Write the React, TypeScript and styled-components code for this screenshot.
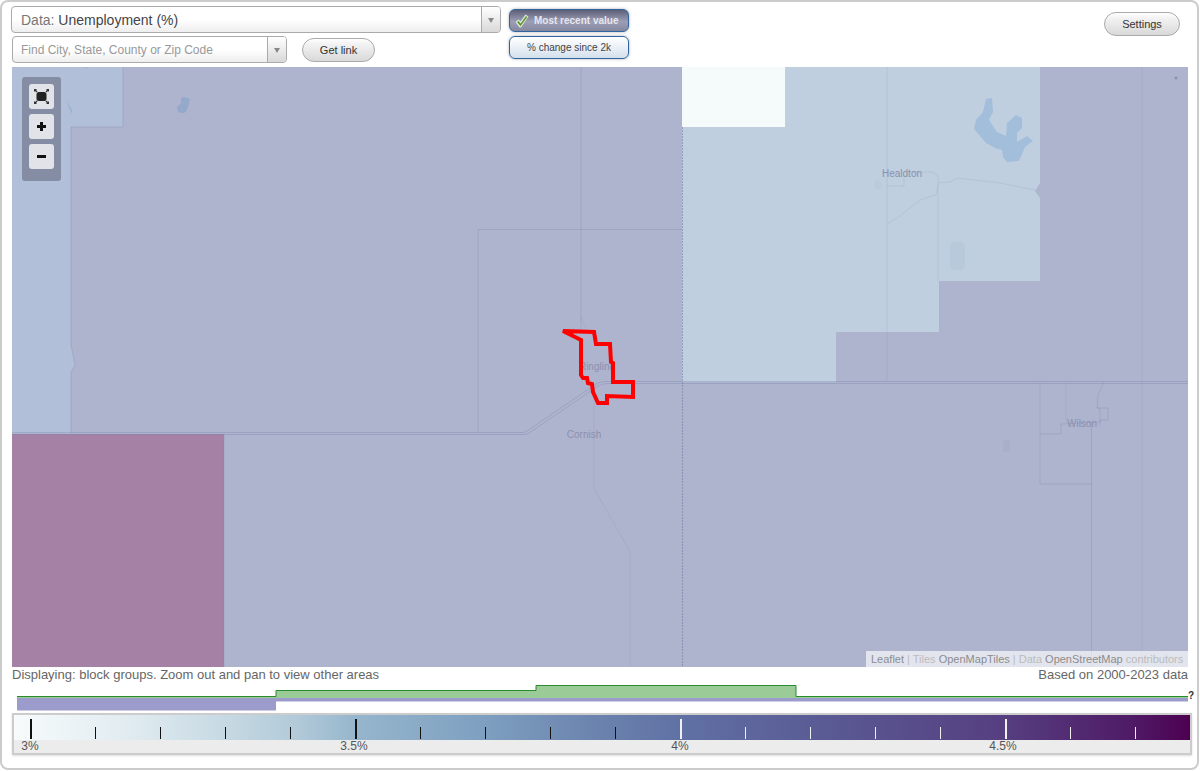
import React from "react";
import styled, { createGlobalStyle } from "styled-components";

const Global = createGlobalStyle`
  html, body { margin: 0; padding: 0; background: #fff; }
  body { font-family: "Liberation Sans", Arial, sans-serif; }
`;

const Frame = styled.div`
  box-sizing: border-box;
  width: 1199px;
  height: 770px;
  border: 2px solid #ccc;
  border-radius: 8px;
  background: #fff;
  padding: 0 8px 0 10px;
  display: flex;
  flex-direction: column;
`;

const Toolbar = styled.header`
  height: 65px;
  display: flex;
  align-items: flex-start;
  margin-left: -1px;
  padding-top: 4px;
  box-sizing: border-box;
`;

const Selects = styled.div`
  width: 490px;
  display: flex;
  flex-direction: column;
  gap: 3px;
`;

const FindRow = styled.div`
  display: flex;
  align-items: flex-start;
  margin-left: 1px;
  gap: 15px;
`;

const Combo = styled.div<{ $w: number }>`
  box-sizing: border-box;
  width: ${(p) => p.$w}px;
  height: 27px;
  border: 1px solid #aaa;
  border-radius: 4px;
  display: flex;
  align-items: stretch;
  overflow: hidden;
  background: linear-gradient(#fff 50%, #eee);
`;

const ComboText = styled.div<{ $size: number; $inset: number }>`
  flex: 1;
  display: flex;
  align-items: center;
  padding-left: ${(p) => p.$inset}px;
  font-size: ${(p) => p.$size}px;
  color: #999;
  white-space: pre;
`;

const DataLabel = styled.span`
  color: #777;
`;
const DataValue = styled.span`
  color: #444;
`;

const ComboArrow = styled.div`
  width: 18px;
  border-left: 1px solid #aaa;
  background: linear-gradient(#fff, #d8d8d8);
  display: flex;
  align-items: center;
  justify-content: center;
  &::after {
    content: "";
    border-left: 3.5px solid transparent;
    border-right: 3.5px solid transparent;
    border-top: 5px solid #888;
    margin-top: 2px;
  }
`;

const PillButton = styled.button`
  box-sizing: border-box;
  height: 24px;
  border: 1px solid #aaa;
  border-radius: 12px;
  padding: 0;
  background: linear-gradient(#fff, #f2f2f2 25%, #d9d9d9);
  font: 11px "Liberation Sans", Arial, sans-serif;
  color: #333;
`;

const GetLink = styled(PillButton)`
  width: 73px;
  margin-top: 2px;
`;

const Settings = styled(PillButton)`
  width: 76px;
  margin: 6px 9px 0 auto;
`;

const Toggles = styled.div`
  display: flex;
  flex-direction: column;
  gap: 4px;
  margin: 3px 0 0 8px;
`;

const Toggle = styled.div<{ $active?: boolean }>`
  box-sizing: border-box;
  width: 120px;
  height: 23px;
  border: 1px solid #2f65a0;
  border-radius: 6px;
  box-shadow: 0 0 3px #aaa;
  display: flex;
  align-items: center;
  justify-content: ${(p) => (p.$active ? "flex-start" : "center")};
  padding-left: ${(p) => (p.$active ? 5 : 0)}px;
  gap: 5px;
  font-size: 10px;
  font-weight: ${(p) => (p.$active ? 700 : 400)};
  color: ${(p) => (p.$active ? "#e6e6ee" : "#444")};
  background: ${(p) =>
    p.$active
      ? "linear-gradient(#5d5f78, #9b9eb4 55%, #85889f)"
      : "linear-gradient(#fff, #e6edf4 60%, #d3e0ec)"};
`;

const MapPane = styled.div`
  position: relative;
  height: 600px;
  width: 1176px;
  flex: none;
  background: #afb4ce;
  overflow: hidden;
`;

const MapSvg = styled.svg`
  display: block;
`;

const Controls = styled.div`
  position: absolute;
  left: 10px;
  top: 10px;
  box-sizing: border-box;
  width: 39px;
  height: 104px;
  padding: 7px;
  border-radius: 3px;
  background: #848da3;
  display: flex;
  flex-direction: column;
  gap: 5px;
`;

const ControlButton = styled.div`
  width: 25px;
  height: 25px;
  border-radius: 3px;
  background: #e2e3e9;
  display: flex;
  align-items: center;
  justify-content: center;
`;

const Attribution = styled.div`
  position: absolute;
  right: 0;
  bottom: 0;
  height: 16px;
  width: 322px;
  box-sizing: border-box;
  background: rgba(255, 255, 255, 0.65);
  padding-left: 5px;
  display: flex;
  align-items: center;
  font-size: 11px;
  color: #bbb;
  white-space: pre;
`;

const AttrLink = styled.span`
  color: #8c8c8c;
`;

const CaptionRow = styled.div`
  box-sizing: border-box;
  height: 16px;
  padding-bottom: 2px;
  display: flex;
  justify-content: space-between;
  align-items: center;
  width: 1176px;
  font-size: 13px;
  color: #666;
  white-space: nowrap;
`;

const Histogram = styled.div`
  position: relative;
  height: 30px;
  width: 1176px;
`;

const Unknown = styled.span`
  position: absolute;
  left: 1176px;
  top: 8px;
  font-size: 10px;
  font-weight: 700;
  line-height: 10px;
  color: #333;
`;

const Legend = styled.div`
  box-sizing: border-box;
  width: 1180px;
  height: 42px;
  border: 2px solid #ccc;
  box-shadow: 0 1px 2px #ddd;
  background: #ececec;
`;

const Ramp = styled.div`
  position: relative;
  height: 25px;
  background: linear-gradient(
    90deg,
    #f7fbfc 0%,
    #e0ebf0 10%,
    #c6d9e3 18%,
    #b2cad9 24%,
    #96b6cd 29%,
    #7e9fc0 40%,
    #6a82ad 50%,
    #6070a4 57%,
    #5a5c95 68%,
    #563f81 84%,
    #4f1b66 95%,
    #4d0050 100%
  );
`;

const Tick = styled.i<{ $major?: boolean; $light?: boolean }>`
  position: absolute;
  bottom: 1px;
  width: ${(p) => (p.$major ? 2 : 1)}px;
  height: ${(p) => (p.$major ? 20 : 12)}px;
  background: ${(p) => (p.$light ? "#f0f0f0" : "#111")};
`;

const Labels = styled.div`
  position: relative;
  height: 13px;
  font-size: 12px;
  line-height: 13px;
  color: #555;
`;

const LegendLabel = styled.span`
  position: absolute;
  top: 0;
  transform: translateX(-50%);
`;

const ticks = [30, 95, 160, 225, 290, 355, 420, 485, 550, 615, 680, 745, 810, 875, 940, 1005, 1070, 1135];
const labels: [string, number][] = [["3%", 30], ["3.5%", 354], ["4%", 680], ["4.5%", 1003]];

const boundary = "rgba(118,128,170,0.3)";
const faint = "rgba(118,128,170,0.16)";
const road = "rgba(118,128,170,0.34)";

const MapDrawing = () => (
  <MapSvg width="1176" height="600" viewBox="12 67 1176 600">
    <path d="M12 67H123V127H71V345L75 365L71 372V433H12Z" fill="#b2bfd8" />
    <path d="M682 67H1040V183L1035 191L1040 198V382H682Z" fill="#bfcfe0" />
    <rect x="682" y="67" width="103" height="60" fill="#f5fbfb" />
    <path d="M836 382V332H939V281H1040V382Z" fill="#afb4ce" />
    <rect x="12" y="434" width="212" height="233" fill="#a582a5" />

    <path
      d="M986 99L992 98L993 112L989 120L997 132L1006 136L1007 123L1016 115L1022 118L1022 128L1017 133L1017 142L1027 136L1033 141L1025 147L1019 161L1007 162L1003 157L1002 150L995 148L986 143L974 129L976 120L983 112Z"
      fill="#a3bedb"
    />
    <path
      d="M181 98Q186 96 190 99L188 107L186 112Q182 114 178 112L177 107L181 103Z"
      fill="#94a9cc"
    />
    <path d="M67 101L72 110L72 114L69 108Z" fill="#98b4d2" />
    <path d="M82 67H90L86 69Z" fill="#a6b7d6" />
    <rect x="950" y="242" width="15" height="28" rx="5" fill="#b9c9dc" />
    <rect x="1003" y="440" width="7" height="12" rx="2" fill="#a9aec9" />
    <ellipse cx="878" cy="185" rx="4" ry="5" fill="#bbcbdc" />
    <circle cx="1176" cy="78" r="1.6" fill="#8a90ae" />

    <g fill="none" stroke={boundary} strokeWidth="1">
      <path d="M123 67V127H71V345L75 365L71 372V433" />
      <path d="M581 67V333" />
      <path d="M478 433V229.500H682" />
      <path d="M224 434V667" />
      <path d="M1040 382V484H1091.500V667" />
      <path d="M1040 434H1061V424L1100 422V408H1097L1098 395L1104 382" />
      <path d="M1097 408H1108V420H1100V426" />
      <path d="M1091.500 423V484" />
    </g>
    <g fill="none" stroke={faint} strokeWidth="1">
      <path d="M581 315Q582 326 590 332" />
      <path d="M594 400V488L630 552V667" />
      <path d="M887 67V382" />
      <path d="M1142 67V667" />
      <path d="M887 186H904V177L910 172H933L938 176V185L936 195L920 200L900 216L887 224" />
      <path d="M938 185V281" />
      <path d="M938 183L950 182L957 178L1000 183L1035 190" />
      <path d="M1066 382V423" />
    </g>
    <path d="M682.500 127V667" fill="none" stroke="rgba(100,110,160,0.5)" strokeDasharray="2 1" />
    <g fill="none" stroke={road} strokeWidth="1">
      <path d="M12 432.500H523Q526 432.500 530 429L596 384Q600 381.500 606 381.500H1188" />
      <path d="M12 434.500H524Q528 434.500 532 431L598 386Q602 383.500 608 383.500H1188" />
    </g>

    <g fontFamily="'Liberation Sans', sans-serif" fontSize="10" fill="#8a90ae" textAnchor="middle">
      <text x="902" y="177">Healdton</text>
      <text x="597" y="370">Ringling</text>
      <text x="584" y="438">Cornish</text>
      <text x="1082" y="427">Wilson</text>
    </g>

    <path
      d="M563 331L594 332L596 344L610 344L611 362L613 363L613 382L633 382L633 397L607 396L607 403L598 403L593 392L592 384L588 383L587 378L583 378L581 375L581 340Z"
      fill="none"
      stroke="#f00"
      strokeWidth="4"
      strokeLinejoin="miter"
    />
  </MapSvg>
);

const FullscreenIcon = () => (
  <svg width="17" height="17" viewBox="0 0 17 17">
    <rect x="3.500" y="4" width="10" height="9" rx="2.500" fill="#222" />
    <path
      d="M1 1H4L3 2L4.500 3.500L3.500 4.500L2 3L1 4ZM16 1V4L15 3L13.500 4.500L12.500 3.500L14 2L13 1ZM1 16V13L2 14L3.500 12.500L4.500 13.500L3 15L4 16ZM16 16H13L14 15L12.500 13.500L13.500 12.500L15 14L16 13Z"
      fill="#333"
    />
  </svg>
);

const PlusIcon = () => (
  <svg width="11" height="11" viewBox="0 0 11 11">
    <path d="M4 1H7V4H10V7H7V10H4V7H1V4H4Z" fill="#111" />
  </svg>
);

const MinusIcon = () => (
  <svg width="11" height="11" viewBox="0 0 11 11">
    <rect x="1" y="4" width="9" height="3" fill="#111" />
  </svg>
);

const CheckIcon = () => (
  <svg width="14" height="14" viewBox="0 0 14 14">
    <path d="M0.500 8L3.500 5.500L5.500 7.500L10.500 0.500L13.500 2.500L6 13.500H4.500Z" fill="#e2e6dc" />
    <path d="M2 8L3.500 7L5.700 9.500L11 2L12.300 3L5.500 12.200Z" fill="#5a9a30" />
  </svg>
);

const HistogramChart = () => (
  <svg width="1176" height="30" viewBox="12 683 1176 30">
    <path d="M17 698V696.500H276V690.500H536V685.500H796V696.500H1188V698Z" fill="#9bcb96" />
    <path d="M17 696.500H276V690.500H536V685.500H796V696.500H1188" fill="none" stroke="#2a8a2e" strokeWidth="1" />
    <path d="M17 698H1188V701.500H276V710.500H17Z" fill="#9c9ccc" />
  </svg>
);

export default function App() {
  return (
    <>
      <Global />
      <Frame>
        <Toolbar>
          <Selects>
            <Combo $w={490}>
              <ComboText $size={14} $inset={9}>
                <DataLabel>Data: </DataLabel>
                <DataValue>Unemployment (%)</DataValue>
              </ComboText>
              <ComboArrow />
            </Combo>
            <FindRow>
              <Combo $w={275}>
                <ComboText $size={12} $inset={8}>Find City, State, County or Zip Code</ComboText>
                <ComboArrow />
              </Combo>
              <GetLink>Get link</GetLink>
            </FindRow>
          </Selects>
          <Toggles>
            <Toggle $active>
              <CheckIcon />
              Most recent value
            </Toggle>
            <Toggle>% change since 2k</Toggle>
          </Toggles>
          <Settings>Settings</Settings>
        </Toolbar>
        <MapPane>
          <MapDrawing />
          <Controls>
            <ControlButton>
              <FullscreenIcon />
            </ControlButton>
            <ControlButton>
              <PlusIcon />
            </ControlButton>
            <ControlButton>
              <MinusIcon />
            </ControlButton>
          </Controls>
          <Attribution>
            <AttrLink>Leaflet</AttrLink>
            {" | Tiles "}
            <AttrLink>OpenMapTiles</AttrLink>
            {" | Data "}
            <AttrLink>OpenStreetMap</AttrLink>
            {" contributors"}
          </Attribution>
        </MapPane>
        <CaptionRow>
          <span>Displaying: block groups. Zoom out and pan to view other areas</span>
          <span>Based on 2000-2023 data</span>
        </CaptionRow>
        <Histogram>
          <HistogramChart />
          <Unknown>?</Unknown>
        </Histogram>
        <Legend>
          <Ramp>
            {ticks.map((x, i) => (
              <Tick
                key={x}
                $major={i % 5 === 0}
                $light={x >= 680}
                style={{ left: x - 14 }}
              />
            ))}
          </Ramp>
          <Labels>
            {labels.map(([t, x]) => (
              <LegendLabel key={t} style={{ left: x - 14 }}>
                {t}
              </LegendLabel>
            ))}
          </Labels>
        </Legend>
      </Frame>
    </>
  );
}
